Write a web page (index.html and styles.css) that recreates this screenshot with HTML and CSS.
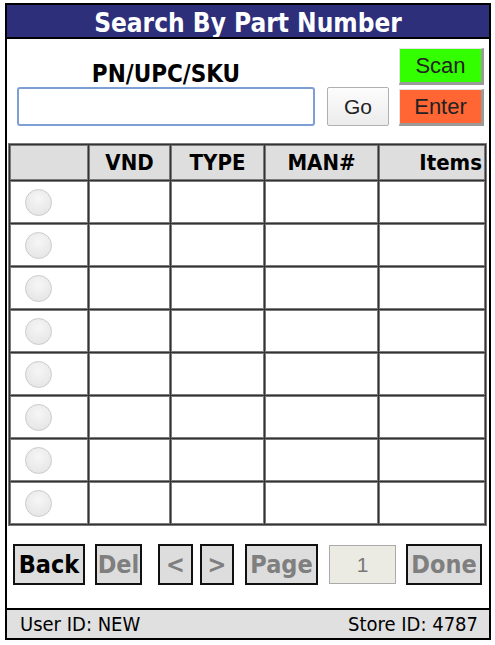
FILE: index.html
```html
<!DOCTYPE html>
<html lang="en">
<head>
    <meta charset="UTF-8">
    <meta name="viewport" content="width=device-width, initial-scale=1.0">
    <title>Search By Part Number</title>
    <link rel="stylesheet" href="styles.css">
</head>
<body>
    <div class="frame">
        <h1 class="title">Search By Part Number</h1>

        <div class="search">
            <div class="search-field">
                <label for="pn">PN/UPC/SKU</label>
                <input type="text" id="pn" class="pn-input">
            </div>
            <button class="go-btn">Go</button>
            <div class="side-btns">
                <button class="side-btn scan">Scan</button>
                <button class="side-btn enter">Enter</button>
            </div>
        </div>

        <table class="results">
            <thead>
                <tr>
                    <th class="c-sel"></th>
                    <th class="c-vnd">VND</th>
                    <th class="c-type">TYPE</th>
                    <th class="c-man">MAN#</th>
                    <th class="c-items">Items</th>
                </tr>
            </thead>
            <tbody>
                <tr><td><span class="radio"></span></td><td></td><td></td><td></td><td></td></tr>
                <tr><td><span class="radio"></span></td><td></td><td></td><td></td><td></td></tr>
                <tr><td><span class="radio"></span></td><td></td><td></td><td></td><td></td></tr>
                <tr><td><span class="radio"></span></td><td></td><td></td><td></td><td></td></tr>
                <tr><td><span class="radio"></span></td><td></td><td></td><td></td><td></td></tr>
                <tr><td><span class="radio"></span></td><td></td><td></td><td></td><td></td></tr>
                <tr><td><span class="radio"></span></td><td></td><td></td><td></td><td></td></tr>
                <tr><td><span class="radio"></span></td><td></td><td></td><td></td><td></td></tr>
            </tbody>
        </table>

        <div class="nav">
            <button class="nav-btn back">Back</button>
            <button class="nav-btn del" disabled>Del</button>
            <button class="nav-btn prev" disabled>&lt;</button>
            <button class="nav-btn next" disabled>&gt;</button>
            <button class="nav-btn page" disabled>Page</button>
            <input type="text" class="page-num" value="1" disabled>
            <button class="nav-btn done" disabled>Done</button>
        </div>

        <div class="status">
            <span>User ID: NEW</span>
            <span>Store ID: 4787</span>
        </div>
    </div>
</body>
</html>
```

FILE: styles.css
```css
body {
    margin: 0;
    padding: 3px 0 0 5px;
    background: white;
    font-family: "DejaVu Sans Condensed", "DejaVu Sans", sans-serif;
}
.frame {
    width: 482px;
    border: 2px solid #000;
}
.title {
    margin: 0;
    height: 32px;
    line-height: 36px;
    background: #2e2f7b;
    border-bottom: 2px solid #000;
    color: white;
    font-size: 26px;
    font-weight: bold;
    text-align: center;
    overflow: hidden;
}
.search {
    display: flex;
    align-items: flex-end;
    height: 80px;
    padding: 7px 0 17px 10px;
}
.search-field {
    display: flex;
    flex-direction: column;
    align-items: center;
    width: 298px;
}
.search-field label {
    font-size: 24px;
    font-weight: bold;
    line-height: 24px;
    margin-bottom: 1px;
}
.pn-input {
    width: 298px;
    height: 39px;
    box-sizing: border-box;
    border: 2px solid #7d9fd6;
    border-radius: 3px;
    outline: none;
}
.go-btn {
    width: 62px;
    height: 39px;
    margin-left: 12px;
    background: linear-gradient(#fdfdfd, #ebebeb);
    border: 1px solid #b0b0b0;
    border-radius: 2px;
    font-family: "Liberation Sans", Arial, sans-serif;
    font-size: 21px;
    color: #222;
}
.side-btns {
    display: flex;
    flex-direction: column;
    gap: 4px;
    margin-left: 10px;
}
.side-btn {
    width: 85px;
    height: 37px;
    padding: 0;
    border-style: solid;
    border-width: 1px 3px 3px 1px;
    border-color: #e4e4e4 #9a9a9a #9a9a9a #e4e4e4;
    font-family: "Liberation Sans", Arial, sans-serif;
    font-size: 22px;
    color: #222;
}
.scan {
    background: #33ff00;
}
.enter {
    background: #ff6633;
}
.results {
    margin-left: 1px;
    width: 479px;
    table-layout: fixed;
    border-collapse: separate;
    border-spacing: 1px;
    background: #333;
    border: 1px solid #7a7a7a;
}
.results th,
.results td {
    box-sizing: border-box;
    border: 1px solid #7a7a7a;
    padding: 0;
}
.results th {
    height: 35px;
    background: #dedede;
    font-size: 22px;
    font-weight: bold;
    text-align: center;
}
.results td {
    height: 42px;
    background: white;
}
.results td:first-child {
    padding-left: 14px;
}
.c-sel { width: 78px; }
.c-vnd { width: 81px; }
.c-type { width: 93px; }
.c-man { width: 113px; }
.results th.c-items {
    width: 106px;
    text-align: right;
    padding-right: 2px;
    white-space: nowrap;
}
.radio {
    display: block;
    width: 27px;
    height: 27px;
    box-sizing: border-box;
    border-radius: 50%;
    border: 1px solid #cacaca;
    background: radial-gradient(circle at 50% 35%, #f6f6f6, #e2e2e2);
}
.nav {
    display: flex;
    align-items: center;
    height: 41px;
    padding: 18px 0 23px 6px;
}
.nav-btn {
    flex-shrink: 0;
    height: 41px;
    padding: 0;
    background: #dddddd;
    border: 2px solid #111;
    border-radius: 0;
    font-family: "DejaVu Sans Condensed", "DejaVu Sans", sans-serif;
    font-size: 25px;
    font-weight: bold;
    color: #7f7f7f;
}
.back {
    width: 72px;
    color: #000;
}
.del {
    width: 47px;
    margin-left: 10px;
}
.prev {
    width: 35px;
    margin-left: 16px;
}
.next {
    width: 34px;
    margin-left: 7px;
}
.page {
    width: 73px;
    margin-left: 11px;
}
.page-num {
    flex-shrink: 0;
    width: 67px;
    height: 39px;
    margin-left: 11px;
    box-sizing: border-box;
    background: #ebebe4;
    border: 1px solid #aaa;
    font-family: "Liberation Sans", Arial, sans-serif;
    font-size: 21px;
    color: #777;
    text-align: center;
}
.done {
    width: 76px;
    margin-left: 10px;
}
.status {
    display: flex;
    justify-content: space-between;
    height: 28px;
    line-height: 28px;
    padding: 0 11px 0 13px;
    background: #e0e0e0;
    border-top: 2px solid #000;
    font-size: 20px;
}
```
